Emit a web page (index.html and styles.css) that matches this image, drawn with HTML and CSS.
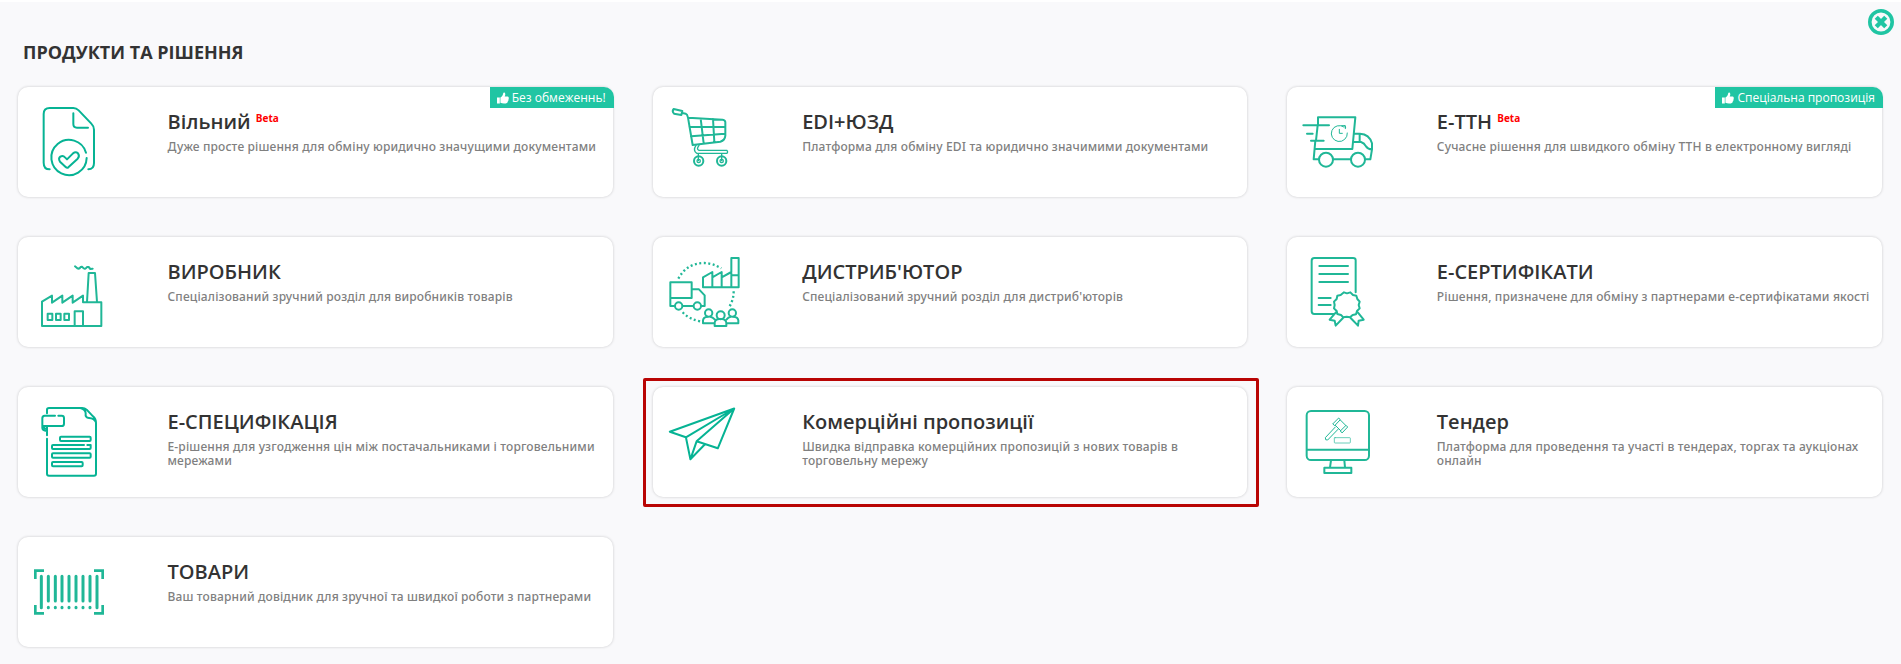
FILE: index.html
```html
<!DOCTYPE html>
<html lang="uk">
<head>
<meta charset="utf-8">
<title>Продукти та рішення</title>
<link rel="stylesheet" href="styles.css">
</head>
<body>
<main class="panel">
  <button class="close" aria-label="Закрити">
    <svg viewBox="0 0 26 26"><circle cx="13" cy="13" r="11.2" fill="none" stroke="#20c5a3" stroke-width="3.6"/><path d="M9.8 9.8l6.4 6.4M16.2 9.8l-6.4 6.4" stroke="#20c5a3" stroke-width="4.4" stroke-linecap="square"/></svg>
  </button>
  <h1 class="heading">ПРОДУКТИ ТА РІШЕННЯ</h1>
  <div class="grid">
    <article class="card">
      <svg class="icon dark" viewBox="-6 -9 300 330"><path d="M89 238Q71 238 71 218V72Q71 54 89 54H160Q169 54 176 61L214 101Q222 109 222 119V219Q222 238 205 238M160 70V102Q160 113 171 113H204"/><path d="M198 188A53 53 0 1 0 200 204"/><path d="M120 215Q114 205 121 200Q129 195 135 202L141 208L159 190Q167 184 174 190Q180 198 173 206L145 232Q141 235 137 231Z"/></svg>
      <div class="text"><h2>Вільний <sup>Beta</sup></h2><p>Дуже просте рішення для обміну юридично значущими документами</p></div>
      <span class="badge"><svg viewBox="0 0 12 12"><path d="M0 5.5H2.8V11.4H0ZM3.4 5.5C5 4.8 6 3 6.2 1.2C6.5.2 8.3.4 8.3 2.2Q8.3 3.3 7.7 4.4H10.7Q12 4.7 11.7 6Q12 7 11.4 7.7Q11.6 8.7 10.9 9.3Q10.8 11.4 8.8 11.4H7Q5 11.4 3.4 10.7Z"/></svg>Без обмеженнь!</span>
    </article>
    <article class="card">
      <svg class="icon" viewBox="8 -9 300 330"><path d="M70 57L96 63L93 75L71 71Q64 64 70 57ZM96 69L106 71Q111 73 113 83L127 165L210 155Q224 151 225 137V97Q225 90 217 89L114 83M117 110L225 111M122 139L224 131M151 86L160 160M188 87L192 156"/><path stroke-width="4" d="M137 166Q127 181 139 190H230Q234 186 230 181H146Q137 178 146 166M144 191V212M214 191V212"/><circle cx="145" cy="213" r="14"/><circle cx="145" cy="213" r="5" stroke-width="4"/><circle cx="214" cy="213" r="14"/><circle cx="214" cy="213" r="5" stroke-width="4"/></svg>
      <div class="text"><h2>EDI+ЮЗД</h2><p>Платформа для обміну EDI та юридично значимими документами</p></div>
    </article>
    <article class="card">
      <svg class="icon" viewBox="-8 -9 300 330"><path d="M85 106V82H197L188 177H78M84 106L79 151M77 152L72 208H87M130 208H183M228 208H242L247 178V160Q239 132 211 131H194M190 156H214Q224 159 229 169Q235 178 247 178M210 131V155M41 106H118M52 131H69M64 152H102"/><circle cx="109" cy="209" r="21"/><circle cx="205" cy="209" r="21"/><path stroke-width="3" d="M163 111A24 24 0 1 0 173 129M149 118V130H158M156 107H167V116M165 107L168 113"/></svg>
      <div class="text"><h2>Е-ТТН <sup>Beta</sup></h2><p>Сучасне рішення для швидкого обміну ТТН в електронному вигляді</p></div>
      <span class="badge"><svg viewBox="0 0 12 12"><path d="M0 5.5H2.8V11.4H0ZM3.4 5.5C5 4.8 6 3 6.2 1.2C6.5.2 8.3.4 8.3 2.2Q8.3 3.3 7.7 4.4H10.7Q12 4.7 11.7 6Q12 7 11.4 7.7Q11.6 8.7 10.9 9.3Q10.8 11.4 8.8 11.4H7Q5 11.4 3.4 10.7Z"/></svg>Спеціальна пропозиція</span>
    </article>

    <article class="card">
      <svg class="icon" viewBox="-6 -9 300 330"><path d="M66 258V185L96 167V188L127 167V188L158 167V188L189 167V187H244V258ZM201 186L206 99H225L231 186M164 257V214H189V257"/><path d="M83 221H97V240H83ZM108 221H122V240H108ZM133 221H147V240H133ZM165 79L172 85Q178 88 182 81L186 80L191 85Q196 89 201 81L206 81L211 87L218 86"/></svg>
      <div class="text"><h2>ВИРОБНИК</h2><p>Спеціалізований зручний розділ для виробників товарів</p></div>
    </article>
    <article class="card">
      <svg class="icon" viewBox="-7 -24 300 330"><path d="M57 183H45V112H109V159H46M83 183H112M109 133H131L148 151V183H138M143 127V97L171 81V126M171 97L199 81V126M199 97L228 81M228 91H250M228 39H250V127H143M228 39V127"/><circle cx="70" cy="183" r="11"/><circle cx="126" cy="183" r="11"/><circle cx="160" cy="204" r="11"/><circle cx="231" cy="204" r="11"/><circle cx="196" cy="211" r="12"/><path d="M178 235H143V226Q144 216 157 215M165 215Q172 216 178 223M213 235H249V226Q248 216 234 215M226 215Q219 216 214 223M178 243V233Q180 222 192 222H200Q212 223 213 234V243Z"/><path class="dots" d="M69 101Q94 54 147 54Q172 55 198 70M235 139Q235 165 221 187M82 202Q102 224 140 230"/></svg>
      <div class="text"><h2>ДИСТРИБ'ЮТОР</h2><p>Спеціалізований зручний розділ для дистриб'юторів</p></div>
    </article>
    <article class="card">
      <svg class="icon" viewBox="-8 -24 300 330"><path d="M198 142V46Q198 39 190 39H74Q66 39 66 47V199Q66 207 74 207H133M89 63H175M89 87H175M89 111H175M87 159H123M87 180H123"/><path d="M163 142L172 145L182 142L190 150L200 152L203 162L210 170L207 180L210 190L202 198L199 208L189 210L181 217L171 215L161 217L154 210L143 207L141 198L133 190L135 180L133 170L141 162L143 152L153 150ZM138 203L120 224L135 227L138 242L160 219M205 203L222 224L207 227L205 242L183 219"/></svg>
      <div class="text"><h2>Е-СЕРТИФІКАТИ</h2><p>Рішення, призначене для обміну з партнерами е-сертифікатами якості</p></div>
    </article>

    <article class="card">
      <svg class="icon dark" viewBox="-6 -24 300 330"><path d="M81 55V44Q81 39 87 39H184Q193 38 200 44L219 64Q228 72 228 84V236Q228 242 222 242H87Q81 242 81 236V131M181 39Q197 43 197 55Q195 68 207 69Q223 70 228 82M105 62H74Q67 62 67 70V99Q67 107 81 108V121M115 62H125Q132 62 132 69V86Q132 93 125 93H67M81 94V108M68 94L76 101"/><path d="M192 150H99Q96 150 96 153V159Q96 162 99 162H209Q212 162 212 159V150H202"/><rect x="120" y="125" width="92" height="13" rx="3"/><rect x="96" y="175" width="116" height="13" rx="3"/><rect x="96" y="201" width="92" height="13" rx="3"/></svg>
      <div class="text"><h2>Е-СПЕЦИФІКАЦІЯ</h2><p>Е-рішення для узгодження цін між постачальниками і торговельними мережами</p></div>
    </article>
    <article class="card selected">
      <svg class="icon dark plane" viewBox="0 0 100 110"><path d="M16.8 44.7L81.2 21.5L64.8 61.3L43.6 54.3L37.4 72.3L32.9 50.3ZM32.9 50.3L81.2 21.5L43.6 54.3M37.4 72.3L51.7 57.5"/></svg>
      <div class="text"><h2>Комерційні пропозиції</h2><p>Швидка відправка комерційних пропозицій з нових товарів в торговельну мережу</p></div>
    </article>
    <article class="card">
      <svg class="icon" viewBox="-8 -24 300 330"><rect x="51" y="48" width="187" height="147" rx="13"/><path d="M52 164H237M124 196L121 217M164 196L166 217M104 218H185V234H104Z"/><path stroke-width="3" d="M130 86L147 69L152 74L136 91ZM152 75L168 91M137 91L153 107M153 107L169 91L174 96L158 113ZM137 96L107 128Q106 137 114 135L145 103"/><rect x="134" y="128" width="48" height="16" rx="2" stroke-width="2"/></svg>
      <div class="text"><h2>Тендер</h2><p>Платформа для проведення та участі в тендерах, торгах та аукціонах онлайн</p></div>
    </article>

    <article class="card">
      <svg class="icon barcode" viewBox="24 21 300 330"><path d="M94 139V233M115 139V213M136 139V213M156 139V213M177 139V213M198 139V213M219 139V213M240 139V213M261 139V233M115 232V233M136 232V233M156 232V233M177 232V233M198 232V233M219 232V233M240 232V233"/><path d="M76 147V122H102M252 122H278V147M76 225V250H102M252 250H278V225"/></svg>
      <div class="text"><h2>ТОВАРИ</h2><p>Ваш товарний довідник для зручної та швидкої роботи з партнерами</p></div>
    </article>
  </div>
</main>
</body>
</html>
```
FILE: styles.css
```css
* { box-sizing: border-box; }
body {
  margin: 0;
  height: 664px;
  overflow: hidden;
  background: #f9f9fb;
  border-top: 2px solid #fff;
  font-family: "Open Sans", "Noto Sans", sans-serif;
  color: #333;
}
.panel { position: relative; padding: 38px 0 0 18px; }
.close {
  position: absolute;
  top: 7px;
  right: 7px;
  width: 26px;
  height: 26px;
  padding: 0;
  border: 0;
  background: none;
}
.close svg { display: block; }
.heading {
  margin: 0 0 22px 5px;
  font-size: 18px;
  line-height: 25px;
  font-weight: 700;
}
.grid {
  display: grid;
  grid-template-columns: repeat(3, 594.67px);
  grid-auto-rows: 110px;
  gap: 40px;
}
.card {
  position: relative;
  display: flex;
  background: #fff;
  border-radius: 10px;
  box-shadow: 0 0 3px rgba(0, 0, 0, .2);
}
.selected::after {
  content: "";
  position: absolute;
  inset: -9px -12px -10px -10px;
  border: 3px solid #b90504;
  border-radius: 2px;
}
.icon {
  flex: none;
  width: 100px;
  height: 110px;
  fill: none;
  stroke: #20b797;
  stroke-width: 6;
  stroke-linejoin: round;
  stroke-linecap: round;
}
.dark { stroke: #06b394; }
.plane { stroke-width: 2; }
.barcode { stroke-width: 9; }
.barcode path + path { stroke-linecap: butt; stroke-linejoin: miter; stroke-width: 8; }
.dots { stroke-width: 7; stroke-linecap: butt; stroke-dasharray: 6 7.5; }
.text { flex: 1; padding: 20px 8px 0 49.5px; }
.text h2 {
  margin: 0;
  font-size: 20px;
  line-height: 30px;
  font-weight: 600;
}
.text sup {
  font-size: 10px;
  line-height: 0;
  font-weight: 700;
  color: #f00;
  vertical-align: 7px;
}
.text p {
  margin: 3px 0 0;
  font-family: "Noto Sans", "Open Sans", sans-serif;
  font-size: 12px;
  line-height: 14px;
  font-weight: 500;
  letter-spacing: .15px;
  color: #808080;
}
.badge {
  position: absolute;
  top: 0;
  right: -1px;
  height: 21px;
  padding: 0 8px 0 7px;
  display: flex;
  align-items: center;
  gap: 3px;
  border-top-right-radius: 10px;
  background: #20c5a3;
  color: #fff;
  font-size: 12px;
  white-space: nowrap;
}
.badge svg { width: 12px; height: 12px; fill: #fff; }
```
